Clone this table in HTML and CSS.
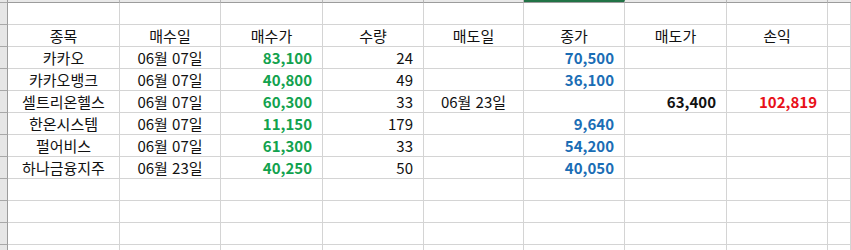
FILE: index.html
```html
<!DOCTYPE html>
<html lang="ko">
<head>
<meta charset="utf-8">
<title>Sheet</title>
<link rel="stylesheet" href="styles.css">
</head>
<body>
<div class="sheet">
  <div class="hd rh"></div><div class="hd"></div><div class="hd"></div><div class="hd"></div><div class="hd"></div><div class="hd"></div><div class="hd sel"></div><div class="hd"></div><div class="hd"></div><div class="hd last"></div>

  <div class="rh"></div><div class="c"></div><div class="c"></div><div class="c"></div><div class="c"></div><div class="c"></div><div class="c"></div><div class="c"></div><div class="c"></div><div class="c"></div>

  <div class="rh"></div><div class="c ctr">종목</div><div class="c ctr">매수일</div><div class="c ctr">매수가</div><div class="c ctr">수량</div><div class="c ctr">매도일</div><div class="c ctr">종가</div><div class="c ctr">매도가</div><div class="c ctr">손익</div><div class="c"></div>

  <div class="rh"></div><div class="c ctr">카카오</div><div class="c ctr">06월 07일</div><div class="c num buy">83,100</div><div class="c num">24</div><div class="c"></div><div class="c num close">70,500</div><div class="c"></div><div class="c"></div><div class="c"></div>

  <div class="rh"></div><div class="c ctr">카카오뱅크</div><div class="c ctr">06월 07일</div><div class="c num buy">40,800</div><div class="c num">49</div><div class="c"></div><div class="c num close">36,100</div><div class="c"></div><div class="c"></div><div class="c"></div>

  <div class="rh"></div><div class="c ctr">셀트리온헬스</div><div class="c ctr">06월 07일</div><div class="c num buy">60,300</div><div class="c num">33</div><div class="c ctr">06월 23일</div><div class="c"></div><div class="c num sell">63,400</div><div class="c num pnl">102,819</div><div class="c"></div>

  <div class="rh"></div><div class="c ctr">한온시스템</div><div class="c ctr">06월 07일</div><div class="c num buy">11,150</div><div class="c num">179</div><div class="c"></div><div class="c num close">9,640</div><div class="c"></div><div class="c"></div><div class="c"></div>

  <div class="rh"></div><div class="c ctr">펄어비스</div><div class="c ctr">06월 07일</div><div class="c num buy">61,300</div><div class="c num">33</div><div class="c"></div><div class="c num close">54,200</div><div class="c"></div><div class="c"></div><div class="c"></div>

  <div class="rh"></div><div class="c ctr">하나금융지주</div><div class="c ctr">06월 23일</div><div class="c num buy">40,250</div><div class="c num">50</div><div class="c"></div><div class="c num close">40,050</div><div class="c"></div><div class="c"></div><div class="c"></div>

  <div class="rh"></div><div class="c"></div><div class="c"></div><div class="c"></div><div class="c"></div><div class="c"></div><div class="c"></div><div class="c"></div><div class="c"></div><div class="c"></div>
  <div class="rh"></div><div class="c"></div><div class="c"></div><div class="c"></div><div class="c"></div><div class="c"></div><div class="c"></div><div class="c"></div><div class="c"></div><div class="c"></div>
  <div class="rh"></div><div class="c"></div><div class="c"></div><div class="c"></div><div class="c"></div><div class="c"></div><div class="c"></div><div class="c"></div><div class="c"></div><div class="c"></div>
  <div class="rh"></div><div class="c"></div><div class="c"></div><div class="c"></div><div class="c"></div><div class="c"></div><div class="c"></div><div class="c"></div><div class="c"></div><div class="c"></div>
</div>
</body>
</html>
```

FILE: styles.css
```css
html, body {
  margin: 0;
  padding: 0;
  background: #ffffff;
  overflow: hidden;
}
.sheet {
  display: grid;
  grid-template-columns: 8px 112px 101px 102px 101px 100px 101px 102px 101px 1fr;
  grid-template-rows: 3px;
  grid-auto-rows: 22px;
  width: 851px;
  height: 250px;
  overflow: hidden;
  font-family: "Noto Sans CJK KR", "Noto Sans", sans-serif;
  font-size: 15px;
  color: #111111;
}
.hd {
  box-sizing: border-box;
  background: #e9e9e9;
  border-bottom: 1px solid #9c9c9c;
  border-right: 1px solid #b8b8b8;
}
.hd.sel {
  border-top: 2px solid #217346;
  background: #d2d2d2;
}
.hd.last {
  border-right: none;
}
.rh {
  box-sizing: border-box;
  background: #e6e6e6;
  border-right: 1px solid #9c9c9c;
  border-bottom: 1px solid #a8a8a8;
}
.c {
  box-sizing: border-box;
  border-right: 1px solid #d4d4d4;
  border-bottom: 1px solid #d4d4d4;
  line-height: 21px;
  white-space: nowrap;
  overflow: visible;
}
.ctr {
  text-align: center;
}
.num {
  text-align: right;
  padding-right: 10px;
}
.buy {
  color: #12a24e;
  font-weight: 700;
}
.close {
  color: #1a6db5;
  font-weight: 700;
}
.sell {
  color: #111111;
  font-weight: 700;
}
.pnl {
  color: #e81018;
  font-weight: 700;
}
```
